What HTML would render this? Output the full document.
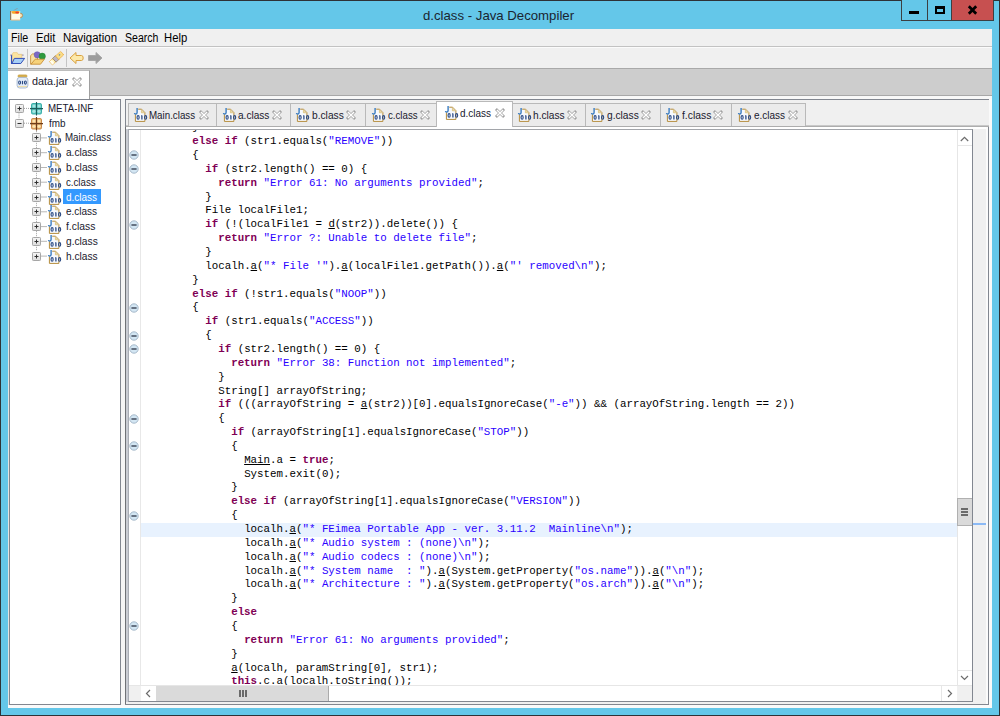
<!DOCTYPE html><html><head><meta charset="utf-8"><style>
*{margin:0;padding:0;box-sizing:border-box}
html,body{width:1000px;height:716px;overflow:hidden;background:#64c7e9}
body{position:relative;font-family:"Liberation Sans",sans-serif}
.a{position:absolute}
.ic{position:absolute;overflow:visible}
.t{position:absolute;white-space:pre;font-family:"Liberation Sans",sans-serif;line-height:1;transform-origin:0 0}
.code{position:absolute;white-space:pre;font-family:"Liberation Mono",monospace;font-size:10.8px;color:#000}
.k{color:#7f0055;font-weight:bold}
.s{color:#2a00ff}
.u{text-decoration:underline;text-underline-offset:1px}
</style></head><body>
<div class="a" style="left:0;top:0;width:1000px;height:716px;border:1px solid #2e3236"></div>
<div class="a" style="left:0;top:0;width:1000px;height:1px;background:#2e3236"></div>
<svg class="ic" style="left:4px;top:2px" width="24" height="24" viewBox="4 2 24 24">
<path d="M13.8 10.6 Q14.5 9.6 15.6 9.4 Q16.8 9.2 17.6 8.0" fill="none" stroke="#8c9aa2" stroke-width="0.9"/>
<path d="M20 13.2 Q22.6 13.2 22.6 15.4 Q22.6 17.6 20 17.8" fill="#f4e2b8" stroke="#b88848" stroke-width="0.9"/>
<rect x="10.4" y="11" width="9.8" height="9.2" fill="#fffbe6"/>
<path d="M10.7 11 V20" stroke="#7a4c22" stroke-width="0.9"/>
<path d="M10.8 20 H20" stroke="#f0b070" stroke-width="0.8"/>
<path d="M11.2 11.2 Q15 10.6 19.8 11.2 L19 13.4 Q15.5 14 12.2 13.4 Z" fill="#f6a626"/>
<ellipse cx="17.2" cy="12.5" rx="1.9" ry="1.1" fill="#ec3c2c"/>
</svg>
<div class="t" style="left:423.38px;top:8.75px;font-size:13.4px;color:#1a2530;transform:scaleX(0.9853);">d.class - Java Decompiler</div>
<div class="a" style="left:901px;top:0;width:93px;height:21px;border:1px solid #3c3f42;border-top:none;background:#64c7e9"></div>
<div class="a" style="left:927px;top:0;width:1px;height:20px;background:#3c3f42"></div>
<div class="a" style="left:951px;top:0;width:43px;height:21px;background:#c75050;border:1px solid #3c3f42;border-top:none"></div>
<div class="a" style="left:909px;top:11px;width:10px;height:3px;background:#000"></div>
<div class="a" style="left:935px;top:6px;width:10px;height:8px;border:2px solid #000;border-top-width:3px"></div>
<svg class="ic" style="left:967px;top:5px" width="11" height="10" viewBox="0 0 11 10">
<path d="M1.8 1.2 L9.2 8.8 M9.2 1.2 L1.8 8.8" stroke="#000" stroke-width="2.7"/></svg>
<div class="a" style="left:8px;top:29px;width:984px;height:679px;background:#f0f0f0"></div>
<div class="t" style="left:10.81px;top:31.54px;font-size:12px;color:#000;transform:scaleX(0.8893);">File</div>
<div class="t" style="left:35.57px;top:31.54px;font-size:12px;color:#000;transform:scaleX(0.9393);">Edit</div>
<div class="t" style="left:62.76px;top:31.54px;font-size:12px;color:#000;transform:scaleX(0.9524);">Navigation</div>
<div class="t" style="left:124.50px;top:31.54px;font-size:12px;color:#000;transform:scaleX(0.8773);">Search</div>
<div class="t" style="left:164.47px;top:31.54px;font-size:12px;color:#000;transform:scaleX(0.9406);">Help</div>
<div class="a" style="left:8px;top:46px;width:984px;height:1px;background:#c2c2c2"></div>
<div class="a" style="left:8px;top:47px;width:984px;height:1px;background:#fbfbfb"></div>
<svg class="ic" style="left:9px;top:50px" width="17" height="16" viewBox="0 0 17 16">
<path d="M1.2 5.1 H14.6" stroke="#8c82aa" stroke-width="1"/>
<path d="M3.2 12 V4.3 L4.2 2.6 H8.2 L9 4.3 H12.8 V8.6 H5.5 Z" fill="#fbe4a0" stroke="#e6c27a" stroke-width="0.6"/>
<path d="M2.5 5.2 V13.4 H11.5" fill="none" stroke="#3450b8" stroke-width="1.1"/>
<path d="M2.9 13.5 L5.4 8.4 H15.6 L11.8 13.5 Z" fill="#a6cff6" stroke="#3450b8" stroke-width="1" stroke-linejoin="round"/>
</svg>
<div class="a" style="left:27px;top:49px;width:1px;height:18px;background:#c4c4c4"></div>
<svg class="ic" style="left:29px;top:50px" width="17" height="16" viewBox="0 0 17 16">
<path d="M1.6 14.2 V5.6 L3.6 3.9 H8.5 V10 Z" fill="#f7e0a0" stroke="#c8913a" stroke-width="0.9"/>
<circle cx="8.2" cy="4.8" r="3.1" fill="#7a68c4" stroke="#6252b0" stroke-width="0.5"/>
<circle cx="13.2" cy="6.3" r="3.2" fill="#2f9a3e" stroke="#268032" stroke-width="0.5"/>
<path d="M2 14.2 L6.2 9.2 H15.4 L11.5 14.2 Z" fill="#f6d27a" stroke="#c8913a" stroke-width="0.9" stroke-linejoin="round"/>
</svg>
<svg class="ic" style="left:48px;top:50px" width="17" height="16" viewBox="0 0 17 16">
<g transform="translate(8.4 8.3) rotate(-42) scale(0.8 0.85)">
<path d="M-9.2 -2.6 H-3.4 V2.6 H-9.2 Z" fill="#fff4b8" stroke="#eba832" stroke-width="0.9"/>
<path d="M-9 -2.4 H-6 V2.4 H-9 Z" fill="#ffffff" opacity="0.8"/>
<path d="M-3.6 -3 H1.4 V3 H-3.6 Z" fill="#bcb6c6" stroke="#9a8462" stroke-width="0.9"/>
<path d="M1.2 -2.8 H9.4 L9.8 -1.4 V1.4 L9.4 2.8 H1.2 Z" fill="#f9dd88" stroke="#eb9e26" stroke-width="1" stroke-dasharray="1.2 0.6"/>
<ellipse cx="5.8" cy="-0.6" rx="1.1" ry="0.9" fill="#7d98a8"/>
</g>
</svg>
<div class="a" style="left:66px;top:49px;width:1px;height:18px;background:#c4c4c4"></div>
<svg class="ic" style="left:69px;top:51px" width="16" height="14" viewBox="0 0 16 14">
<path d="M1 7 L7 1.5 V4.5 H12.5 Q14.2 4.5 14.2 7 Q14.2 9.5 12.5 9.5 H7 V12.5 Z" fill="#fce9aa" stroke="#d9a140" stroke-width="1" stroke-linejoin="round"/>
</svg>
<svg class="ic" style="left:87px;top:51px" width="16" height="14" viewBox="0 0 16 14">
<path d="M15 7 L9 1.5 V4.5 H1.5 V9.5 H9 V12.5 Z" fill="#9c9c9c" stroke="#a8a8a8" stroke-width="1" stroke-linejoin="round"/>
</svg>
<div class="a" style="left:8px;top:68px;width:984px;height:1px;background:#a9a9a9"></div>
<div class="a" style="left:8px;top:69px;width:984px;height:27px;background:#cdcdcd"></div>
<div class="a" style="left:8px;top:95px;width:984px;height:1px;background:#a8a8a8"></div>
<div class="a" style="left:8px;top:96px;width:984px;height:3px;background:#f8f8f8"></div>
<div class="a" style="left:8px;top:70px;width:82px;height:29px;background:#fff;border-right:1px solid #a0a0a0;border-top:1px solid #bdbdbd"></div>
<svg class="ic" style="left:16px;top:74px" width="13" height="15" viewBox="0 0 13 15">
<rect x="2.2" y="1" width="8.6" height="2.2" rx="0.6" fill="#dcb452" stroke="#c49a3a" stroke-width="0.8"/>
<rect x="1.1" y="3.4" width="10.8" height="10.6" rx="2.6" fill="#e4ecf8" stroke="#a4b6d0" stroke-width="0.9"/>
<path d="M2 12.6 H11" stroke="#f0dca0" stroke-width="1"/>
<g fill="none" stroke="#2b4a84" stroke-width="1.05"><ellipse cx="3.6" cy="8.6" rx="0.95" ry="1.6"/><ellipse cx="9.4" cy="8.6" rx="0.95" ry="1.6"/></g>
<path d="M6.5 6.9 V10.3" stroke="#2b4a84" stroke-width="1.2"/>
</svg>
<div class="t" style="left:32.23px;top:76.49px;font-size:11px;color:#1a1a2e;transform:scaleX(0.9819);">data.jar</div>
<svg class="ic" style="left:71.8px;top:77px" width="10" height="10" viewBox="0 0 10 10">
<path d="M1.9 1.9 L8.1 8.1 M8.1 1.9 L1.9 8.1" stroke="#a3a3a3" stroke-width="2.8" stroke-linecap="square"/>
<path d="M1.9 1.9 L8.1 8.1 M8.1 1.9 L1.9 8.1" stroke="#ffffff" stroke-width="1.4" stroke-linecap="butt"/>
</svg>
<div class="a" style="left:8px;top:99px;width:114px;height:609px;background:#fff"></div>
<div class="a" style="left:9px;top:99px;width:112px;height:606px;border:1px solid #828790;background:#fff"></div>
<div class="a" style="left:8px;top:99px;width:1px;height:606px;background:#e3e3e3"></div>
<div class="a" style="left:121px;top:99px;width:4px;height:609px;background:#f5f5f5"></div>
<svg class="ic" style="left:0;top:0" width="130" height="270" viewBox="0 0 130 270"><path d="M19 113.4 V118.17" stroke="#a0a0a0" stroke-dasharray="1 1"/><path d="M24 108.4 H31 M24 123.2 H31" stroke="#a0a0a0" stroke-dasharray="1 1"/><path d="M36.5 129.2 V251.1" stroke="#a0a0a0" stroke-dasharray="1 1"/><path d="M41 137.9 H47" stroke="#b8b8b8"/><path d="M41 152.7 H47" stroke="#b8b8b8"/><path d="M41 167.5 H47" stroke="#b8b8b8"/><path d="M41 182.2 H47" stroke="#b8b8b8"/><path d="M41 197.0 H47" stroke="#b8b8b8"/><path d="M41 211.8 H47" stroke="#b8b8b8"/><path d="M41 226.6 H47" stroke="#b8b8b8"/><path d="M41 241.3 H47" stroke="#b8b8b8"/><path d="M41 256.1 H47" stroke="#b8b8b8"/></svg>
<svg class="ic" style="left:15px;top:103.9px" width="9" height="9" viewBox="0 0 9 9">
<defs><linearGradient id="eg" x1="0" y1="0" x2="0" y2="1"><stop offset="0" stop-color="#f6f6f6"/><stop offset="1" stop-color="#dcdcdc"/></linearGradient></defs>
<rect x="0.5" y="0.5" width="8" height="8" rx="0.8" fill="url(#eg)" stroke="#a6a6a6"/>
<path d="M2.5 4.5 H6.5" stroke="#303030" stroke-width="1"/><path d="M4.5 2.5 V6.5" stroke="#303030" stroke-width="1"/>
</svg>
<svg class="ic" style="left:30px;top:101.9px" width="13" height="13" viewBox="0 0 13 13">
<rect x="1.5" y="1.5" width="10" height="10.5" rx="1.2" fill="#5ec8c2" stroke="#3aaea8" stroke-width="1"/>
<circle cx="4" cy="4" r="1.6" fill="#a8e6e2"/><circle cx="9" cy="4" r="1.6" fill="#a8e6e2"/>
<circle cx="4" cy="9.3" r="1.6" fill="#a8e6e2"/><circle cx="9" cy="9.3" r="1.6" fill="#a8e6e2"/>
<path d="M6.5 0 V13.4 M0 6.6 H13" stroke="#1c5e5c" stroke-width="1.1"/>
</svg>
<div class="t" style="left:47.87px;top:102.99px;font-size:11px;color:#1a1a2e;transform:scaleX(0.8820);">META-INF</div>
<svg class="ic" style="left:15px;top:118.67px" width="9" height="9" viewBox="0 0 9 9">
<defs><linearGradient id="eg" x1="0" y1="0" x2="0" y2="1"><stop offset="0" stop-color="#f6f6f6"/><stop offset="1" stop-color="#dcdcdc"/></linearGradient></defs>
<rect x="0.5" y="0.5" width="8" height="8" rx="0.8" fill="url(#eg)" stroke="#a6a6a6"/>
<path d="M2.5 4.5 H6.5" stroke="#303030" stroke-width="1"/>
</svg>
<svg class="ic" style="left:30px;top:116.67px" width="13" height="13" viewBox="0 0 13 13">
<rect x="1.5" y="1.5" width="10" height="10.5" rx="1.2" fill="#e8b070" stroke="#c98a48" stroke-width="1"/>
<circle cx="4" cy="4" r="1.6" fill="#fde6b0"/><circle cx="9" cy="4" r="1.6" fill="#fde6b0"/>
<circle cx="4" cy="9.3" r="1.6" fill="#fde6b0"/><circle cx="9" cy="9.3" r="1.6" fill="#fde6b0"/>
<path d="M6.5 0 V13.4 M0 6.6 H13" stroke="#6e3e1a" stroke-width="1.1"/>
</svg>
<div class="t" style="left:48.64px;top:117.76px;font-size:11px;color:#1a1a2e;transform:scaleX(0.8980);">fmb</div>
<svg class="ic" style="left:32px;top:133.44px" width="9" height="9" viewBox="0 0 9 9">
<defs><linearGradient id="eg" x1="0" y1="0" x2="0" y2="1"><stop offset="0" stop-color="#f6f6f6"/><stop offset="1" stop-color="#dcdcdc"/></linearGradient></defs>
<rect x="0.5" y="0.5" width="8" height="8" rx="0.8" fill="url(#eg)" stroke="#a6a6a6"/>
<path d="M2.5 4.5 H6.5" stroke="#303030" stroke-width="1"/><path d="M4.5 2.5 V6.5" stroke="#303030" stroke-width="1"/>
</svg>
<svg class="ic" style="left:47.8px;top:131.44px" width="14" height="15" viewBox="0 0 14 15">
<path d="M1.4 6.2 V13.4 H10.9 V4.6 L7.6 1.2 H4.2" fill="#f6f9fe" stroke="#b48c3c" stroke-width="1"/>
<path d="M7.4 1.6 V4.8 H10.5" fill="#e8d8a8" stroke="#d8bb70" stroke-width="0.7"/>
<path d="M3.1 0 V4.6 Q3.1 6.1 1.7 6.1 Q0.6 6.1 0.5 5.0" fill="none" stroke="#3a7cc2" stroke-width="1.4"/>
<g fill="none" stroke="#2b4a84" stroke-width="1.15">
<ellipse cx="4.1" cy="9.4" rx="1.05" ry="1.85"/>
<ellipse cx="11.6" cy="9.4" rx="1.05" ry="1.85"/>
</g>
<path d="M7.9 7.4 V11.4" stroke="#2b4a84" stroke-width="1.3"/>
<path d="M7.1 8.1 L7.9 7.4" stroke="#2b4a84" stroke-width="0.8"/>
</svg>
<div class="t" style="left:65.46px;top:132.43px;font-size:11px;color:#1a1a2e;transform:scaleX(0.8866);">Main.class</div>
<svg class="ic" style="left:32px;top:148.21px" width="9" height="9" viewBox="0 0 9 9">
<defs><linearGradient id="eg" x1="0" y1="0" x2="0" y2="1"><stop offset="0" stop-color="#f6f6f6"/><stop offset="1" stop-color="#dcdcdc"/></linearGradient></defs>
<rect x="0.5" y="0.5" width="8" height="8" rx="0.8" fill="url(#eg)" stroke="#a6a6a6"/>
<path d="M2.5 4.5 H6.5" stroke="#303030" stroke-width="1"/><path d="M4.5 2.5 V6.5" stroke="#303030" stroke-width="1"/>
</svg>
<svg class="ic" style="left:47.8px;top:146.21px" width="14" height="15" viewBox="0 0 14 15">
<path d="M1.4 6.2 V13.4 H10.9 V4.6 L7.6 1.2 H4.2" fill="#f6f9fe" stroke="#b48c3c" stroke-width="1"/>
<path d="M7.4 1.6 V4.8 H10.5" fill="#e8d8a8" stroke="#d8bb70" stroke-width="0.7"/>
<path d="M3.1 0 V4.6 Q3.1 6.1 1.7 6.1 Q0.6 6.1 0.5 5.0" fill="none" stroke="#3a7cc2" stroke-width="1.4"/>
<g fill="none" stroke="#2b4a84" stroke-width="1.15">
<ellipse cx="4.1" cy="9.4" rx="1.05" ry="1.85"/>
<ellipse cx="11.6" cy="9.4" rx="1.05" ry="1.85"/>
</g>
<path d="M7.9 7.4 V11.4" stroke="#2b4a84" stroke-width="1.3"/>
<path d="M7.1 8.1 L7.9 7.4" stroke="#2b4a84" stroke-width="0.8"/>
</svg>
<div class="t" style="left:65.67px;top:147.20px;font-size:11px;color:#1a1a2e;transform:scaleX(0.9176);">a.class</div>
<svg class="ic" style="left:32px;top:162.98000000000002px" width="9" height="9" viewBox="0 0 9 9">
<defs><linearGradient id="eg" x1="0" y1="0" x2="0" y2="1"><stop offset="0" stop-color="#f6f6f6"/><stop offset="1" stop-color="#dcdcdc"/></linearGradient></defs>
<rect x="0.5" y="0.5" width="8" height="8" rx="0.8" fill="url(#eg)" stroke="#a6a6a6"/>
<path d="M2.5 4.5 H6.5" stroke="#303030" stroke-width="1"/><path d="M4.5 2.5 V6.5" stroke="#303030" stroke-width="1"/>
</svg>
<svg class="ic" style="left:47.8px;top:160.98000000000002px" width="14" height="15" viewBox="0 0 14 15">
<path d="M1.4 6.2 V13.4 H10.9 V4.6 L7.6 1.2 H4.2" fill="#f6f9fe" stroke="#b48c3c" stroke-width="1"/>
<path d="M7.4 1.6 V4.8 H10.5" fill="#e8d8a8" stroke="#d8bb70" stroke-width="0.7"/>
<path d="M3.1 0 V4.6 Q3.1 6.1 1.7 6.1 Q0.6 6.1 0.5 5.0" fill="none" stroke="#3a7cc2" stroke-width="1.4"/>
<g fill="none" stroke="#2b4a84" stroke-width="1.15">
<ellipse cx="4.1" cy="9.4" rx="1.05" ry="1.85"/>
<ellipse cx="11.6" cy="9.4" rx="1.05" ry="1.85"/>
</g>
<path d="M7.9 7.4 V11.4" stroke="#2b4a84" stroke-width="1.3"/>
<path d="M7.1 8.1 L7.9 7.4" stroke="#2b4a84" stroke-width="0.8"/>
</svg>
<div class="t" style="left:65.82px;top:161.97px;font-size:11px;color:#1a1a2e;transform:scaleX(0.9282);">b.class</div>
<svg class="ic" style="left:32px;top:177.75px" width="9" height="9" viewBox="0 0 9 9">
<defs><linearGradient id="eg" x1="0" y1="0" x2="0" y2="1"><stop offset="0" stop-color="#f6f6f6"/><stop offset="1" stop-color="#dcdcdc"/></linearGradient></defs>
<rect x="0.5" y="0.5" width="8" height="8" rx="0.8" fill="url(#eg)" stroke="#a6a6a6"/>
<path d="M2.5 4.5 H6.5" stroke="#303030" stroke-width="1"/><path d="M4.5 2.5 V6.5" stroke="#303030" stroke-width="1"/>
</svg>
<svg class="ic" style="left:47.8px;top:175.75px" width="14" height="15" viewBox="0 0 14 15">
<path d="M1.4 6.2 V13.4 H10.9 V4.6 L7.6 1.2 H4.2" fill="#f6f9fe" stroke="#b48c3c" stroke-width="1"/>
<path d="M7.4 1.6 V4.8 H10.5" fill="#e8d8a8" stroke="#d8bb70" stroke-width="0.7"/>
<path d="M3.1 0 V4.6 Q3.1 6.1 1.7 6.1 Q0.6 6.1 0.5 5.0" fill="none" stroke="#3a7cc2" stroke-width="1.4"/>
<g fill="none" stroke="#2b4a84" stroke-width="1.15">
<ellipse cx="4.1" cy="9.4" rx="1.05" ry="1.85"/>
<ellipse cx="11.6" cy="9.4" rx="1.05" ry="1.85"/>
</g>
<path d="M7.9 7.4 V11.4" stroke="#2b4a84" stroke-width="1.3"/>
<path d="M7.1 8.1 L7.9 7.4" stroke="#2b4a84" stroke-width="0.8"/>
</svg>
<div class="t" style="left:65.89px;top:176.74px;font-size:11px;color:#1a1a2e;transform:scaleX(0.8796);">c.class</div>
<svg class="ic" style="left:32px;top:192.52px" width="9" height="9" viewBox="0 0 9 9">
<defs><linearGradient id="eg" x1="0" y1="0" x2="0" y2="1"><stop offset="0" stop-color="#f6f6f6"/><stop offset="1" stop-color="#dcdcdc"/></linearGradient></defs>
<rect x="0.5" y="0.5" width="8" height="8" rx="0.8" fill="url(#eg)" stroke="#a6a6a6"/>
<path d="M2.5 4.5 H6.5" stroke="#303030" stroke-width="1"/><path d="M4.5 2.5 V6.5" stroke="#303030" stroke-width="1"/>
</svg>
<svg class="ic" style="left:47.8px;top:190.52px" width="14" height="15" viewBox="0 0 14 15">
<path d="M1.4 6.2 V13.4 H10.9 V4.6 L7.6 1.2 H4.2" fill="#f6f9fe" stroke="#b48c3c" stroke-width="1"/>
<path d="M7.4 1.6 V4.8 H10.5" fill="#e8d8a8" stroke="#d8bb70" stroke-width="0.7"/>
<path d="M3.1 0 V4.6 Q3.1 6.1 1.7 6.1 Q0.6 6.1 0.5 5.0" fill="none" stroke="#3a7cc2" stroke-width="1.4"/>
<g fill="none" stroke="#2b4a84" stroke-width="1.15">
<ellipse cx="4.1" cy="9.4" rx="1.05" ry="1.85"/>
<ellipse cx="11.6" cy="9.4" rx="1.05" ry="1.85"/>
</g>
<path d="M7.9 7.4 V11.4" stroke="#2b4a84" stroke-width="1.3"/>
<path d="M7.1 8.1 L7.9 7.4" stroke="#2b4a84" stroke-width="0.8"/>
</svg>
<div class="a" style="left:63px;top:189.0px;width:38px;height:14.8px;background:#3399ff"></div>
<div class="t" style="left:65.87px;top:191.51px;font-size:11px;color:#fff;transform:scaleX(0.9058);">d.class</div>
<svg class="ic" style="left:32px;top:207.29000000000002px" width="9" height="9" viewBox="0 0 9 9">
<defs><linearGradient id="eg" x1="0" y1="0" x2="0" y2="1"><stop offset="0" stop-color="#f6f6f6"/><stop offset="1" stop-color="#dcdcdc"/></linearGradient></defs>
<rect x="0.5" y="0.5" width="8" height="8" rx="0.8" fill="url(#eg)" stroke="#a6a6a6"/>
<path d="M2.5 4.5 H6.5" stroke="#303030" stroke-width="1"/><path d="M4.5 2.5 V6.5" stroke="#303030" stroke-width="1"/>
</svg>
<svg class="ic" style="left:47.8px;top:205.29000000000002px" width="14" height="15" viewBox="0 0 14 15">
<path d="M1.4 6.2 V13.4 H10.9 V4.6 L7.6 1.2 H4.2" fill="#f6f9fe" stroke="#b48c3c" stroke-width="1"/>
<path d="M7.4 1.6 V4.8 H10.5" fill="#e8d8a8" stroke="#d8bb70" stroke-width="0.7"/>
<path d="M3.1 0 V4.6 Q3.1 6.1 1.7 6.1 Q0.6 6.1 0.5 5.0" fill="none" stroke="#3a7cc2" stroke-width="1.4"/>
<g fill="none" stroke="#2b4a84" stroke-width="1.15">
<ellipse cx="4.1" cy="9.4" rx="1.05" ry="1.85"/>
<ellipse cx="11.6" cy="9.4" rx="1.05" ry="1.85"/>
</g>
<path d="M7.9 7.4 V11.4" stroke="#2b4a84" stroke-width="1.3"/>
<path d="M7.1 8.1 L7.9 7.4" stroke="#2b4a84" stroke-width="0.8"/>
</svg>
<div class="t" style="left:65.88px;top:206.28px;font-size:11px;color:#1a1a2e;transform:scaleX(0.9087);">e.class</div>
<svg class="ic" style="left:32px;top:222.06px" width="9" height="9" viewBox="0 0 9 9">
<defs><linearGradient id="eg" x1="0" y1="0" x2="0" y2="1"><stop offset="0" stop-color="#f6f6f6"/><stop offset="1" stop-color="#dcdcdc"/></linearGradient></defs>
<rect x="0.5" y="0.5" width="8" height="8" rx="0.8" fill="url(#eg)" stroke="#a6a6a6"/>
<path d="M2.5 4.5 H6.5" stroke="#303030" stroke-width="1"/><path d="M4.5 2.5 V6.5" stroke="#303030" stroke-width="1"/>
</svg>
<svg class="ic" style="left:47.8px;top:220.06px" width="14" height="15" viewBox="0 0 14 15">
<path d="M1.4 6.2 V13.4 H10.9 V4.6 L7.6 1.2 H4.2" fill="#f6f9fe" stroke="#b48c3c" stroke-width="1"/>
<path d="M7.4 1.6 V4.8 H10.5" fill="#e8d8a8" stroke="#d8bb70" stroke-width="0.7"/>
<path d="M3.1 0 V4.6 Q3.1 6.1 1.7 6.1 Q0.6 6.1 0.5 5.0" fill="none" stroke="#3a7cc2" stroke-width="1.4"/>
<g fill="none" stroke="#2b4a84" stroke-width="1.15">
<ellipse cx="4.1" cy="9.4" rx="1.05" ry="1.85"/>
<ellipse cx="11.6" cy="9.4" rx="1.05" ry="1.85"/>
</g>
<path d="M7.9 7.4 V11.4" stroke="#2b4a84" stroke-width="1.3"/>
<path d="M7.1 8.1 L7.9 7.4" stroke="#2b4a84" stroke-width="0.8"/>
</svg>
<div class="t" style="left:66.43px;top:221.05px;font-size:11px;color:#1a1a2e;transform:scaleX(0.9404);">f.class</div>
<svg class="ic" style="left:32px;top:236.83px" width="9" height="9" viewBox="0 0 9 9">
<defs><linearGradient id="eg" x1="0" y1="0" x2="0" y2="1"><stop offset="0" stop-color="#f6f6f6"/><stop offset="1" stop-color="#dcdcdc"/></linearGradient></defs>
<rect x="0.5" y="0.5" width="8" height="8" rx="0.8" fill="url(#eg)" stroke="#a6a6a6"/>
<path d="M2.5 4.5 H6.5" stroke="#303030" stroke-width="1"/><path d="M4.5 2.5 V6.5" stroke="#303030" stroke-width="1"/>
</svg>
<svg class="ic" style="left:47.8px;top:234.83px" width="14" height="15" viewBox="0 0 14 15">
<path d="M1.4 6.2 V13.4 H10.9 V4.6 L7.6 1.2 H4.2" fill="#f6f9fe" stroke="#b48c3c" stroke-width="1"/>
<path d="M7.4 1.6 V4.8 H10.5" fill="#e8d8a8" stroke="#d8bb70" stroke-width="0.7"/>
<path d="M3.1 0 V4.6 Q3.1 6.1 1.7 6.1 Q0.6 6.1 0.5 5.0" fill="none" stroke="#3a7cc2" stroke-width="1.4"/>
<g fill="none" stroke="#2b4a84" stroke-width="1.15">
<ellipse cx="4.1" cy="9.4" rx="1.05" ry="1.85"/>
<ellipse cx="11.6" cy="9.4" rx="1.05" ry="1.85"/>
</g>
<path d="M7.9 7.4 V11.4" stroke="#2b4a84" stroke-width="1.3"/>
<path d="M7.1 8.1 L7.9 7.4" stroke="#2b4a84" stroke-width="0.8"/>
</svg>
<div class="t" style="left:65.86px;top:235.82px;font-size:11px;color:#1a1a2e;transform:scaleX(0.9269);">g.class</div>
<svg class="ic" style="left:32px;top:251.60000000000002px" width="9" height="9" viewBox="0 0 9 9">
<defs><linearGradient id="eg" x1="0" y1="0" x2="0" y2="1"><stop offset="0" stop-color="#f6f6f6"/><stop offset="1" stop-color="#dcdcdc"/></linearGradient></defs>
<rect x="0.5" y="0.5" width="8" height="8" rx="0.8" fill="url(#eg)" stroke="#a6a6a6"/>
<path d="M2.5 4.5 H6.5" stroke="#303030" stroke-width="1"/><path d="M4.5 2.5 V6.5" stroke="#303030" stroke-width="1"/>
</svg>
<svg class="ic" style="left:47.8px;top:249.60000000000002px" width="14" height="15" viewBox="0 0 14 15">
<path d="M1.4 6.2 V13.4 H10.9 V4.6 L7.6 1.2 H4.2" fill="#f6f9fe" stroke="#b48c3c" stroke-width="1"/>
<path d="M7.4 1.6 V4.8 H10.5" fill="#e8d8a8" stroke="#d8bb70" stroke-width="0.7"/>
<path d="M3.1 0 V4.6 Q3.1 6.1 1.7 6.1 Q0.6 6.1 0.5 5.0" fill="none" stroke="#3a7cc2" stroke-width="1.4"/>
<g fill="none" stroke="#2b4a84" stroke-width="1.15">
<ellipse cx="4.1" cy="9.4" rx="1.05" ry="1.85"/>
<ellipse cx="11.6" cy="9.4" rx="1.05" ry="1.85"/>
</g>
<path d="M7.9 7.4 V11.4" stroke="#2b4a84" stroke-width="1.3"/>
<path d="M7.1 8.1 L7.9 7.4" stroke="#2b4a84" stroke-width="0.8"/>
</svg>
<div class="t" style="left:65.79px;top:250.59px;font-size:11px;color:#1a1a2e;transform:scaleX(0.9230);">h.class</div>
<div class="a" style="left:125px;top:99px;width:864px;height:606px;border:1px solid #828790;border-right:none;background:#f0f0f0"></div>
<div class="a" style="left:988px;top:126px;width:1px;height:579px;background:#828790"></div>
<div class="a" style="left:989px;top:99px;width:3px;height:609px;background:#fafafa"></div>
<div class="a" style="left:8px;top:705px;width:984px;height:3px;background:#fafafa"></div>
<div class="a" style="left:126px;top:125px;width:863px;height:1px;background:#c9c9c9"></div>
<div class="a" style="left:126px;top:126px;width:863px;height:1px;background:#adadad"></div>
<div class="a" style="left:126px;top:127px;width:862px;height:2px;background:#ffffff"></div>
<div class="a" style="left:128px;top:103px;width:89px;height:23px;background:#ebebeb;border:1px solid #b9b9b9;border-bottom:none"></div>
<svg class="ic" style="left:134.0px;top:108px" width="14" height="15" viewBox="0 0 14 15">
<path d="M1.4 6.2 V13.4 H10.9 V4.6 L7.6 1.2 H4.2" fill="#f6f9fe" stroke="#b48c3c" stroke-width="1"/>
<path d="M7.4 1.6 V4.8 H10.5" fill="#e8d8a8" stroke="#d8bb70" stroke-width="0.7"/>
<path d="M3.1 0 V4.6 Q3.1 6.1 1.7 6.1 Q0.6 6.1 0.5 5.0" fill="none" stroke="#3a7cc2" stroke-width="1.4"/>
<g fill="none" stroke="#2b4a84" stroke-width="1.15">
<ellipse cx="4.1" cy="9.4" rx="1.05" ry="1.85"/>
<ellipse cx="11.6" cy="9.4" rx="1.05" ry="1.85"/>
</g>
<path d="M7.9 7.4 V11.4" stroke="#2b4a84" stroke-width="1.3"/>
<path d="M7.1 8.1 L7.9 7.4" stroke="#2b4a84" stroke-width="0.8"/>
</svg>
<div class="t" style="left:149.46px;top:109.79px;font-size:11px;color:#1a1a2e;transform:scaleX(0.8866);">Main.class</div>
<svg class="ic" style="left:198.5px;top:109.7px" width="10" height="10" viewBox="0 0 10 10">
<path d="M1.9 1.9 L8.1 8.1 M8.1 1.9 L1.9 8.1" stroke="#a3a3a3" stroke-width="2.8" stroke-linecap="square"/>
<path d="M1.9 1.9 L8.1 8.1 M8.1 1.9 L1.9 8.1" stroke="#ffffff" stroke-width="1.4" stroke-linecap="butt"/>
</svg>
<div class="a" style="left:216px;top:103px;width:75px;height:23px;background:#ebebeb;border:1px solid #b9b9b9;border-bottom:none"></div>
<svg class="ic" style="left:222.60000000000002px;top:108px" width="14" height="15" viewBox="0 0 14 15">
<path d="M1.4 6.2 V13.4 H10.9 V4.6 L7.6 1.2 H4.2" fill="#f6f9fe" stroke="#b48c3c" stroke-width="1"/>
<path d="M7.4 1.6 V4.8 H10.5" fill="#e8d8a8" stroke="#d8bb70" stroke-width="0.7"/>
<path d="M3.1 0 V4.6 Q3.1 6.1 1.7 6.1 Q0.6 6.1 0.5 5.0" fill="none" stroke="#3a7cc2" stroke-width="1.4"/>
<g fill="none" stroke="#2b4a84" stroke-width="1.15">
<ellipse cx="4.1" cy="9.4" rx="1.05" ry="1.85"/>
<ellipse cx="11.6" cy="9.4" rx="1.05" ry="1.85"/>
</g>
<path d="M7.9 7.4 V11.4" stroke="#2b4a84" stroke-width="1.3"/>
<path d="M7.1 8.1 L7.9 7.4" stroke="#2b4a84" stroke-width="0.8"/>
</svg>
<div class="t" style="left:238.27px;top:109.79px;font-size:11px;color:#1a1a2e;transform:scaleX(0.9176);">a.class</div>
<svg class="ic" style="left:272.2px;top:109.7px" width="10" height="10" viewBox="0 0 10 10">
<path d="M1.9 1.9 L8.1 8.1 M8.1 1.9 L1.9 8.1" stroke="#a3a3a3" stroke-width="2.8" stroke-linecap="square"/>
<path d="M1.9 1.9 L8.1 8.1 M8.1 1.9 L1.9 8.1" stroke="#ffffff" stroke-width="1.4" stroke-linecap="butt"/>
</svg>
<div class="a" style="left:290px;top:103px;width:76px;height:23px;background:#ebebeb;border:1px solid #b9b9b9;border-bottom:none"></div>
<svg class="ic" style="left:296.2px;top:108px" width="14" height="15" viewBox="0 0 14 15">
<path d="M1.4 6.2 V13.4 H10.9 V4.6 L7.6 1.2 H4.2" fill="#f6f9fe" stroke="#b48c3c" stroke-width="1"/>
<path d="M7.4 1.6 V4.8 H10.5" fill="#e8d8a8" stroke="#d8bb70" stroke-width="0.7"/>
<path d="M3.1 0 V4.6 Q3.1 6.1 1.7 6.1 Q0.6 6.1 0.5 5.0" fill="none" stroke="#3a7cc2" stroke-width="1.4"/>
<g fill="none" stroke="#2b4a84" stroke-width="1.15">
<ellipse cx="4.1" cy="9.4" rx="1.05" ry="1.85"/>
<ellipse cx="11.6" cy="9.4" rx="1.05" ry="1.85"/>
</g>
<path d="M7.9 7.4 V11.4" stroke="#2b4a84" stroke-width="1.3"/>
<path d="M7.1 8.1 L7.9 7.4" stroke="#2b4a84" stroke-width="0.8"/>
</svg>
<div class="t" style="left:311.72px;top:109.79px;font-size:11px;color:#1a1a2e;transform:scaleX(0.9282);">b.class</div>
<svg class="ic" style="left:346.3px;top:109.7px" width="10" height="10" viewBox="0 0 10 10">
<path d="M1.9 1.9 L8.1 8.1 M8.1 1.9 L1.9 8.1" stroke="#a3a3a3" stroke-width="2.8" stroke-linecap="square"/>
<path d="M1.9 1.9 L8.1 8.1 M8.1 1.9 L1.9 8.1" stroke="#ffffff" stroke-width="1.4" stroke-linecap="butt"/>
</svg>
<div class="a" style="left:365px;top:103px;width:72px;height:23px;background:#ebebeb;border:1px solid #b9b9b9;border-bottom:none"></div>
<svg class="ic" style="left:372.1px;top:108px" width="14" height="15" viewBox="0 0 14 15">
<path d="M1.4 6.2 V13.4 H10.9 V4.6 L7.6 1.2 H4.2" fill="#f6f9fe" stroke="#b48c3c" stroke-width="1"/>
<path d="M7.4 1.6 V4.8 H10.5" fill="#e8d8a8" stroke="#d8bb70" stroke-width="0.7"/>
<path d="M3.1 0 V4.6 Q3.1 6.1 1.7 6.1 Q0.6 6.1 0.5 5.0" fill="none" stroke="#3a7cc2" stroke-width="1.4"/>
<g fill="none" stroke="#2b4a84" stroke-width="1.15">
<ellipse cx="4.1" cy="9.4" rx="1.05" ry="1.85"/>
<ellipse cx="11.6" cy="9.4" rx="1.05" ry="1.85"/>
</g>
<path d="M7.9 7.4 V11.4" stroke="#2b4a84" stroke-width="1.3"/>
<path d="M7.1 8.1 L7.9 7.4" stroke="#2b4a84" stroke-width="0.8"/>
</svg>
<div class="t" style="left:387.79px;top:109.79px;font-size:11px;color:#1a1a2e;transform:scaleX(0.8796);">c.class</div>
<svg class="ic" style="left:420.2px;top:109.7px" width="10" height="10" viewBox="0 0 10 10">
<path d="M1.9 1.9 L8.1 8.1 M8.1 1.9 L1.9 8.1" stroke="#a3a3a3" stroke-width="2.8" stroke-linecap="square"/>
<path d="M1.9 1.9 L8.1 8.1 M8.1 1.9 L1.9 8.1" stroke="#ffffff" stroke-width="1.4" stroke-linecap="butt"/>
</svg>
<div class="a" style="left:436px;top:101px;width:77px;height:26px;background:#fff;border:1px solid #b9b9b9;border-bottom:none"></div>
<svg class="ic" style="left:444.8px;top:106px" width="14" height="15" viewBox="0 0 14 15">
<path d="M1.4 6.2 V13.4 H10.9 V4.6 L7.6 1.2 H4.2" fill="#f6f9fe" stroke="#b48c3c" stroke-width="1"/>
<path d="M7.4 1.6 V4.8 H10.5" fill="#e8d8a8" stroke="#d8bb70" stroke-width="0.7"/>
<path d="M3.1 0 V4.6 Q3.1 6.1 1.7 6.1 Q0.6 6.1 0.5 5.0" fill="none" stroke="#3a7cc2" stroke-width="1.4"/>
<g fill="none" stroke="#2b4a84" stroke-width="1.15">
<ellipse cx="4.1" cy="9.4" rx="1.05" ry="1.85"/>
<ellipse cx="11.6" cy="9.4" rx="1.05" ry="1.85"/>
</g>
<path d="M7.9 7.4 V11.4" stroke="#2b4a84" stroke-width="1.3"/>
<path d="M7.1 8.1 L7.9 7.4" stroke="#2b4a84" stroke-width="0.8"/>
</svg>
<div class="t" style="left:460.47px;top:107.79px;font-size:11px;color:#1a1a2e;transform:scaleX(0.9058);">d.class</div>
<svg class="ic" style="left:494.9px;top:107.7px" width="10" height="10" viewBox="0 0 10 10">
<path d="M1.9 1.9 L8.1 8.1 M8.1 1.9 L1.9 8.1" stroke="#a3a3a3" stroke-width="2.8" stroke-linecap="square"/>
<path d="M1.9 1.9 L8.1 8.1 M8.1 1.9 L1.9 8.1" stroke="#ffffff" stroke-width="1.4" stroke-linecap="butt"/>
</svg>
<div class="a" style="left:512px;top:103px;width:74px;height:23px;background:#ebebeb;border:1px solid #b9b9b9;border-bottom:none"></div>
<svg class="ic" style="left:517.5999999999999px;top:108px" width="14" height="15" viewBox="0 0 14 15">
<path d="M1.4 6.2 V13.4 H10.9 V4.6 L7.6 1.2 H4.2" fill="#f6f9fe" stroke="#b48c3c" stroke-width="1"/>
<path d="M7.4 1.6 V4.8 H10.5" fill="#e8d8a8" stroke="#d8bb70" stroke-width="0.7"/>
<path d="M3.1 0 V4.6 Q3.1 6.1 1.7 6.1 Q0.6 6.1 0.5 5.0" fill="none" stroke="#3a7cc2" stroke-width="1.4"/>
<g fill="none" stroke="#2b4a84" stroke-width="1.15">
<ellipse cx="4.1" cy="9.4" rx="1.05" ry="1.85"/>
<ellipse cx="11.6" cy="9.4" rx="1.05" ry="1.85"/>
</g>
<path d="M7.9 7.4 V11.4" stroke="#2b4a84" stroke-width="1.3"/>
<path d="M7.1 8.1 L7.9 7.4" stroke="#2b4a84" stroke-width="0.8"/>
</svg>
<div class="t" style="left:533.09px;top:109.79px;font-size:11px;color:#1a1a2e;transform:scaleX(0.9230);">h.class</div>
<svg class="ic" style="left:567.2px;top:109.7px" width="10" height="10" viewBox="0 0 10 10">
<path d="M1.9 1.9 L8.1 8.1 M8.1 1.9 L1.9 8.1" stroke="#a3a3a3" stroke-width="2.8" stroke-linecap="square"/>
<path d="M1.9 1.9 L8.1 8.1 M8.1 1.9 L1.9 8.1" stroke="#ffffff" stroke-width="1.4" stroke-linecap="butt"/>
</svg>
<div class="a" style="left:585px;top:103px;width:76px;height:23px;background:#ebebeb;border:1px solid #b9b9b9;border-bottom:none"></div>
<svg class="ic" style="left:591.1999999999999px;top:108px" width="14" height="15" viewBox="0 0 14 15">
<path d="M1.4 6.2 V13.4 H10.9 V4.6 L7.6 1.2 H4.2" fill="#f6f9fe" stroke="#b48c3c" stroke-width="1"/>
<path d="M7.4 1.6 V4.8 H10.5" fill="#e8d8a8" stroke="#d8bb70" stroke-width="0.7"/>
<path d="M3.1 0 V4.6 Q3.1 6.1 1.7 6.1 Q0.6 6.1 0.5 5.0" fill="none" stroke="#3a7cc2" stroke-width="1.4"/>
<g fill="none" stroke="#2b4a84" stroke-width="1.15">
<ellipse cx="4.1" cy="9.4" rx="1.05" ry="1.85"/>
<ellipse cx="11.6" cy="9.4" rx="1.05" ry="1.85"/>
</g>
<path d="M7.9 7.4 V11.4" stroke="#2b4a84" stroke-width="1.3"/>
<path d="M7.1 8.1 L7.9 7.4" stroke="#2b4a84" stroke-width="0.8"/>
</svg>
<div class="t" style="left:606.86px;top:109.79px;font-size:11px;color:#1a1a2e;transform:scaleX(0.9269);">g.class</div>
<svg class="ic" style="left:641.3px;top:109.7px" width="10" height="10" viewBox="0 0 10 10">
<path d="M1.9 1.9 L8.1 8.1 M8.1 1.9 L1.9 8.1" stroke="#a3a3a3" stroke-width="2.8" stroke-linecap="square"/>
<path d="M1.9 1.9 L8.1 8.1 M8.1 1.9 L1.9 8.1" stroke="#ffffff" stroke-width="1.4" stroke-linecap="butt"/>
</svg>
<div class="a" style="left:660px;top:103px;width:72px;height:23px;background:#ebebeb;border:1px solid #b9b9b9;border-bottom:none"></div>
<svg class="ic" style="left:666.0px;top:108px" width="14" height="15" viewBox="0 0 14 15">
<path d="M1.4 6.2 V13.4 H10.9 V4.6 L7.6 1.2 H4.2" fill="#f6f9fe" stroke="#b48c3c" stroke-width="1"/>
<path d="M7.4 1.6 V4.8 H10.5" fill="#e8d8a8" stroke="#d8bb70" stroke-width="0.7"/>
<path d="M3.1 0 V4.6 Q3.1 6.1 1.7 6.1 Q0.6 6.1 0.5 5.0" fill="none" stroke="#3a7cc2" stroke-width="1.4"/>
<g fill="none" stroke="#2b4a84" stroke-width="1.15">
<ellipse cx="4.1" cy="9.4" rx="1.05" ry="1.85"/>
<ellipse cx="11.6" cy="9.4" rx="1.05" ry="1.85"/>
</g>
<path d="M7.9 7.4 V11.4" stroke="#2b4a84" stroke-width="1.3"/>
<path d="M7.1 8.1 L7.9 7.4" stroke="#2b4a84" stroke-width="0.8"/>
</svg>
<div class="t" style="left:681.83px;top:109.79px;font-size:11px;color:#1a1a2e;transform:scaleX(0.9404);">f.class</div>
<svg class="ic" style="left:713.4px;top:109.7px" width="10" height="10" viewBox="0 0 10 10">
<path d="M1.9 1.9 L8.1 8.1 M8.1 1.9 L1.9 8.1" stroke="#a3a3a3" stroke-width="2.8" stroke-linecap="square"/>
<path d="M1.9 1.9 L8.1 8.1 M8.1 1.9 L1.9 8.1" stroke="#ffffff" stroke-width="1.4" stroke-linecap="butt"/>
</svg>
<div class="a" style="left:731px;top:103px;width:75px;height:23px;background:#ebebeb;border:1px solid #b9b9b9;border-bottom:none"></div>
<svg class="ic" style="left:738.0px;top:108px" width="14" height="15" viewBox="0 0 14 15">
<path d="M1.4 6.2 V13.4 H10.9 V4.6 L7.6 1.2 H4.2" fill="#f6f9fe" stroke="#b48c3c" stroke-width="1"/>
<path d="M7.4 1.6 V4.8 H10.5" fill="#e8d8a8" stroke="#d8bb70" stroke-width="0.7"/>
<path d="M3.1 0 V4.6 Q3.1 6.1 1.7 6.1 Q0.6 6.1 0.5 5.0" fill="none" stroke="#3a7cc2" stroke-width="1.4"/>
<g fill="none" stroke="#2b4a84" stroke-width="1.15">
<ellipse cx="4.1" cy="9.4" rx="1.05" ry="1.85"/>
<ellipse cx="11.6" cy="9.4" rx="1.05" ry="1.85"/>
</g>
<path d="M7.9 7.4 V11.4" stroke="#2b4a84" stroke-width="1.3"/>
<path d="M7.1 8.1 L7.9 7.4" stroke="#2b4a84" stroke-width="0.8"/>
</svg>
<div class="t" style="left:753.68px;top:109.79px;font-size:11px;color:#1a1a2e;transform:scaleX(0.9087);">e.class</div>
<svg class="ic" style="left:788.1px;top:109.7px" width="10" height="10" viewBox="0 0 10 10">
<path d="M1.9 1.9 L8.1 8.1 M8.1 1.9 L1.9 8.1" stroke="#a3a3a3" stroke-width="2.8" stroke-linecap="square"/>
<path d="M1.9 1.9 L8.1 8.1 M8.1 1.9 L1.9 8.1" stroke="#ffffff" stroke-width="1.4" stroke-linecap="butt"/>
</svg>
<div class="a" style="left:128px;top:129px;width:845px;height:573px;border:1px solid #828790;border-top-color:#a2a5aa;border-left-color:#a9adb5;background:#fff"></div>
<div class="a" style="left:126px;top:129px;width:2px;height:573px;background:#c9ccd3"></div>
<div class="a" style="left:125px;top:127px;width:1px;height:577px;background:#6f7276"></div>
<div class="a" style="left:140px;top:130px;width:1px;height:556px;background:#e8e8e8"></div>
<div class="a" style="left:141px;top:523px;width:816px;height:14px;background:#e8f2fe"></div>
<div class="a" style="left:141px;top:130px;width:816px;height:556px;overflow:hidden"><div class="code" style="left:51.29px;top:-8.65px;line-height:13.85px">}</div><div class="code" style="left:51.29px;top:5.20px;line-height:13.85px"><span class="k">else if</span> (str1.equals(<span class="s">"REMOVE"</span>))</div><div class="code" style="left:51.29px;top:19.05px;line-height:13.85px">{</div><div class="code" style="left:64.25px;top:32.90px;line-height:13.85px"><span class="k">if</span> (str2.length() == 0) {</div><div class="code" style="left:77.21px;top:46.75px;line-height:13.85px"><span class="k">return</span> <span class="s">"Error 61: No arguments provided"</span>;</div><div class="code" style="left:64.25px;top:60.60px;line-height:13.85px">}</div><div class="code" style="left:64.25px;top:74.45px;line-height:13.85px">File localFile1;</div><div class="code" style="left:64.25px;top:88.30px;line-height:13.85px"><span class="k">if</span> (!(localFile1 = <span class="u">d</span>(str2)).delete()) {</div><div class="code" style="left:77.21px;top:102.15px;line-height:13.85px"><span class="k">return</span> <span class="s">"Error ?: Unable to delete file"</span>;</div><div class="code" style="left:64.25px;top:116.00px;line-height:13.85px">}</div><div class="code" style="left:64.25px;top:129.85px;line-height:13.85px">localh.<span class="u">a</span>(<span class="s">"* File '"</span>).<span class="u">a</span>(localFile1.getPath()).<span class="u">a</span>(<span class="s">"' removed\n"</span>);</div><div class="code" style="left:51.29px;top:143.70px;line-height:13.85px">}</div><div class="code" style="left:51.29px;top:157.55px;line-height:13.85px"><span class="k">else if</span> (!str1.equals(<span class="s">"NOOP"</span>))</div><div class="code" style="left:51.29px;top:171.40px;line-height:13.85px">{</div><div class="code" style="left:64.25px;top:185.25px;line-height:13.85px"><span class="k">if</span> (str1.equals(<span class="s">"ACCESS"</span>))</div><div class="code" style="left:64.25px;top:199.10px;line-height:13.85px">{</div><div class="code" style="left:77.21px;top:212.95px;line-height:13.85px"><span class="k">if</span> (str2.length() == 0) {</div><div class="code" style="left:90.17px;top:226.80px;line-height:13.85px"><span class="k">return</span> <span class="s">"Error 38: Function not implemented"</span>;</div><div class="code" style="left:77.21px;top:240.65px;line-height:13.85px">}</div><div class="code" style="left:77.21px;top:254.50px;line-height:13.85px">String[] arrayOfString;</div><div class="code" style="left:77.21px;top:268.35px;line-height:13.85px"><span class="k">if</span> (((arrayOfString = <span class="u">a</span>(str2))[0].equalsIgnoreCase(<span class="s">"-e"</span>)) &amp;&amp; (arrayOfString.length == 2))</div><div class="code" style="left:77.21px;top:282.20px;line-height:13.85px">{</div><div class="code" style="left:90.17px;top:296.05px;line-height:13.85px"><span class="k">if</span> (arrayOfString[1].equalsIgnoreCase(<span class="s">"STOP"</span>))</div><div class="code" style="left:90.17px;top:309.90px;line-height:13.85px">{</div><div class="code" style="left:103.13px;top:323.75px;line-height:13.85px"><span class="u">Main</span>.a = <span class="k">true</span>;</div><div class="code" style="left:103.13px;top:337.60px;line-height:13.85px">System.exit(0);</div><div class="code" style="left:90.17px;top:351.45px;line-height:13.85px">}</div><div class="code" style="left:90.17px;top:365.30px;line-height:13.85px"><span class="k">else if</span> (arrayOfString[1].equalsIgnoreCase(<span class="s">"VERSION"</span>))</div><div class="code" style="left:90.17px;top:379.15px;line-height:13.85px">{</div><div class="code" style="left:103.13px;top:393.00px;line-height:13.85px">localh.<span class="u">a</span>(<span class="s">"* FEimea Portable App - ver. 3.11.2  Mainline\n"</span>);</div><div class="code" style="left:103.13px;top:406.85px;line-height:13.85px">localh.<span class="u">a</span>(<span class="s">"* Audio system : (none)\n"</span>);</div><div class="code" style="left:103.13px;top:420.70px;line-height:13.85px">localh.<span class="u">a</span>(<span class="s">"* Audio codecs : (none)\n"</span>);</div><div class="code" style="left:103.13px;top:434.55px;line-height:13.85px">localh.<span class="u">a</span>(<span class="s">"* System name  : "</span>).<span class="u">a</span>(System.getProperty(<span class="s">"os.name"</span>)).<span class="u">a</span>(<span class="s">"\n"</span>);</div><div class="code" style="left:103.13px;top:448.40px;line-height:13.85px">localh.<span class="u">a</span>(<span class="s">"* Architecture : "</span>).<span class="u">a</span>(System.getProperty(<span class="s">"os.arch"</span>)).<span class="u">a</span>(<span class="s">"\n"</span>);</div><div class="code" style="left:90.17px;top:462.25px;line-height:13.85px">}</div><div class="code" style="left:90.17px;top:476.10px;line-height:13.85px"><span class="k">else</span></div><div class="code" style="left:90.17px;top:489.95px;line-height:13.85px">{</div><div class="code" style="left:103.13px;top:503.80px;line-height:13.85px"><span class="k">return</span> <span class="s">"Error 61: No arguments provided"</span>;</div><div class="code" style="left:90.17px;top:517.65px;line-height:13.85px">}</div><div class="code" style="left:90.17px;top:531.50px;line-height:13.85px"><span class="u">a</span>(localh, paramString[0], str1);</div><div class="code" style="left:90.17px;top:545.35px;line-height:13.85px"><span class="k">this</span>.c.a(localh.toString());</div></div>
<svg class="ic" style="left:129.4px;top:150.4px" width="10" height="10" viewBox="0 0 10 10">
<circle cx="5" cy="5" r="4.2" fill="#d3e6f3" stroke="#9fb2c4" stroke-width="0.9"/>
<path d="M2.4 5 H7.6" stroke="#2a3344" stroke-width="1.3"/>
</svg>
<svg class="ic" style="left:129.4px;top:164.3px" width="10" height="10" viewBox="0 0 10 10">
<circle cx="5" cy="5" r="4.2" fill="#d3e6f3" stroke="#9fb2c4" stroke-width="0.9"/>
<path d="M2.4 5 H7.6" stroke="#2a3344" stroke-width="1.3"/>
</svg>
<svg class="ic" style="left:129.4px;top:219.7px" width="10" height="10" viewBox="0 0 10 10">
<circle cx="5" cy="5" r="4.2" fill="#d3e6f3" stroke="#9fb2c4" stroke-width="0.9"/>
<path d="M2.4 5 H7.6" stroke="#2a3344" stroke-width="1.3"/>
</svg>
<svg class="ic" style="left:129.4px;top:302.8px" width="10" height="10" viewBox="0 0 10 10">
<circle cx="5" cy="5" r="4.2" fill="#d3e6f3" stroke="#9fb2c4" stroke-width="0.9"/>
<path d="M2.4 5 H7.6" stroke="#2a3344" stroke-width="1.3"/>
</svg>
<svg class="ic" style="left:129.4px;top:330.5px" width="10" height="10" viewBox="0 0 10 10">
<circle cx="5" cy="5" r="4.2" fill="#d3e6f3" stroke="#9fb2c4" stroke-width="0.9"/>
<path d="M2.4 5 H7.6" stroke="#2a3344" stroke-width="1.3"/>
</svg>
<svg class="ic" style="left:129.4px;top:344.3px" width="10" height="10" viewBox="0 0 10 10">
<circle cx="5" cy="5" r="4.2" fill="#d3e6f3" stroke="#9fb2c4" stroke-width="0.9"/>
<path d="M2.4 5 H7.6" stroke="#2a3344" stroke-width="1.3"/>
</svg>
<svg class="ic" style="left:129.4px;top:413.6px" width="10" height="10" viewBox="0 0 10 10">
<circle cx="5" cy="5" r="4.2" fill="#d3e6f3" stroke="#9fb2c4" stroke-width="0.9"/>
<path d="M2.4 5 H7.6" stroke="#2a3344" stroke-width="1.3"/>
</svg>
<svg class="ic" style="left:129.4px;top:441.3px" width="10" height="10" viewBox="0 0 10 10">
<circle cx="5" cy="5" r="4.2" fill="#d3e6f3" stroke="#9fb2c4" stroke-width="0.9"/>
<path d="M2.4 5 H7.6" stroke="#2a3344" stroke-width="1.3"/>
</svg>
<svg class="ic" style="left:129.4px;top:510.6px" width="10" height="10" viewBox="0 0 10 10">
<circle cx="5" cy="5" r="4.2" fill="#d3e6f3" stroke="#9fb2c4" stroke-width="0.9"/>
<path d="M2.4 5 H7.6" stroke="#2a3344" stroke-width="1.3"/>
</svg>
<svg class="ic" style="left:129.4px;top:621.4px" width="10" height="10" viewBox="0 0 10 10">
<circle cx="5" cy="5" r="4.2" fill="#d3e6f3" stroke="#9fb2c4" stroke-width="0.9"/>
<path d="M2.4 5 H7.6" stroke="#2a3344" stroke-width="1.3"/>
</svg>
<div class="a" style="left:957px;top:130px;width:15px;height:556px;background:#fff;border-left:1px solid #e6e6e6"></div>
<div class="a" style="left:957px;top:145px;width:15px;height:1px;background:#e6e6e6"></div>
<div class="a" style="left:957px;top:670px;width:15px;height:1px;background:#e6e6e6"></div>
<svg class="ic" style="left:957px;top:130px" width="15" height="15" viewBox="0 0 15 15"><path d="M3.8 11 L7.5 7.3 L11.2 11" fill="none" stroke="#6c6c6c" stroke-width="1.2"/></svg>
<svg class="ic" style="left:957px;top:670px" width="15" height="15" viewBox="0 0 15 15"><path d="M4 6 L7.5 9.5 L11 6" fill="none" stroke="#6c6c6c" stroke-width="1.2"/></svg>
<div class="a" style="left:957px;top:498px;width:15px;height:28px;background:#dadada;border:1px solid #b0b0b0;border-right:none"></div>
<div class="a" style="left:961px;top:508px;width:7px;height:2px;background:#6a6a6a"></div>
<div class="a" style="left:961px;top:511px;width:7px;height:2px;background:#6a6a6a"></div>
<div class="a" style="left:961px;top:514px;width:7px;height:2px;background:#6a6a6a"></div>
<div class="a" style="left:986px;top:127px;width:2px;height:577px;background:#fbfbfb"></div>
<div class="a" style="left:129px;top:685px;width:843px;height:16px;background:#fff;border-top:1px solid #e6e6e6"></div>
<div class="a" style="left:129px;top:686px;width:12px;height:15px;background:#f0f0f0"></div>
<div class="a" style="left:156px;top:686px;width:1px;height:15px;background:#e6e6e6"></div>
<div class="a" style="left:941px;top:686px;width:1px;height:15px;background:#e6e6e6"></div>
<div class="a" style="left:957px;top:686px;width:15px;height:15px;background:#f0f0f0"></div>
<svg class="ic" style="left:141px;top:686px" width="15" height="15" viewBox="0 0 15 15"><path d="M9 4 L5.5 7.5 L9 11" fill="none" stroke="#6c6c6c" stroke-width="1.2"/></svg>
<svg class="ic" style="left:942px;top:686px" width="15" height="15" viewBox="0 0 15 15"><path d="M6 4 L9.5 7.5 L6 11" fill="none" stroke="#6c6c6c" stroke-width="1.2"/></svg>
<div class="a" style="left:156px;top:686px;width:173px;height:15px;background:#dadada;border-right:1px solid #ababab"></div>
<div class="a" style="left:239px;top:690px;width:2px;height:7px;background:#6a6a6a"></div>
<div class="a" style="left:242px;top:690px;width:2px;height:7px;background:#6a6a6a"></div>
<div class="a" style="left:245px;top:690px;width:2px;height:7px;background:#6a6a6a"></div>
<div class="a" style="left:973px;top:523px;width:13px;height:2px;background:#8cbaf6"></div>
</body></html>
